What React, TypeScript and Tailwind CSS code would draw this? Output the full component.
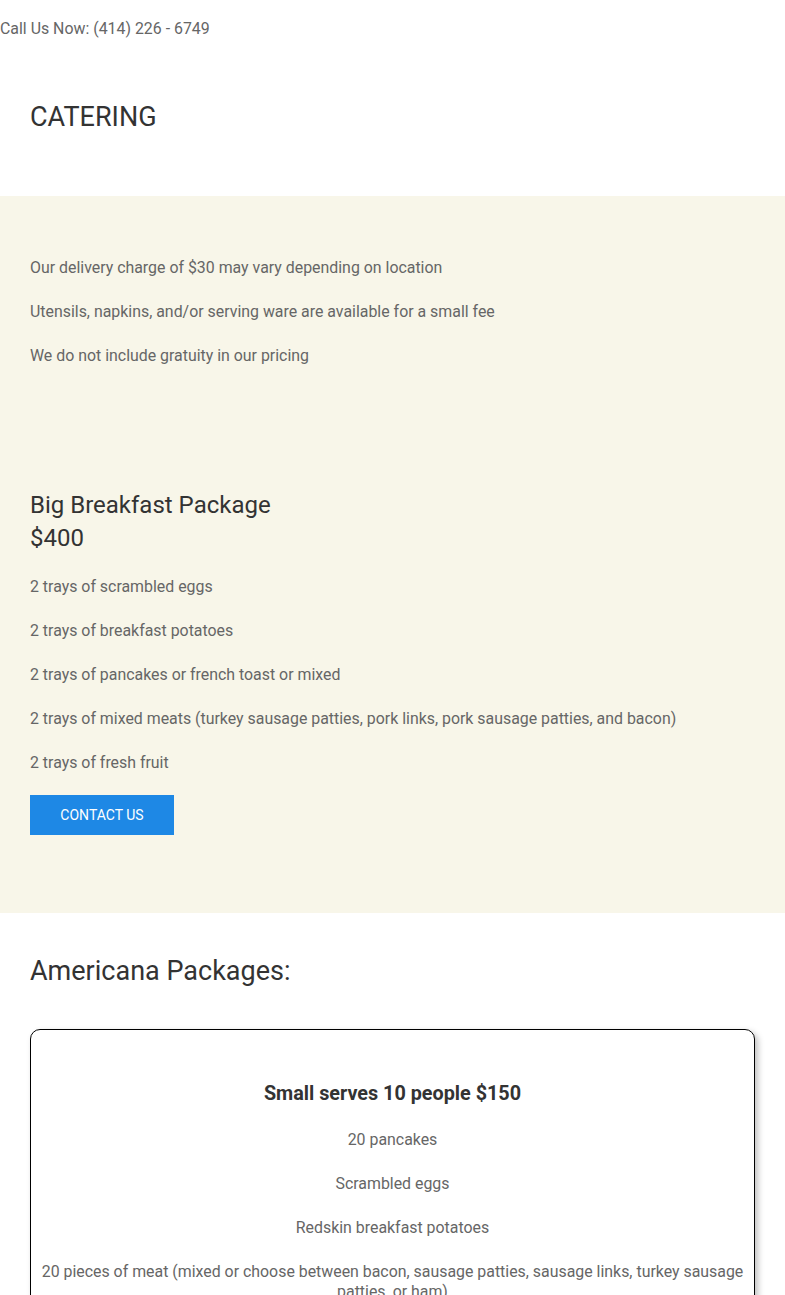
import React from "react";

const font = { fontFamily: "Roboto, 'Noto Sans', sans-serif" };

export default function App() {
  const infos = [
    "Our delivery charge of $30 may vary depending on location",
    "Utensils, napkins, and/or serving ware are available for a small fee",
    "We do not include gratuity in our pricing",
  ];
  const trays = [
    "2 trays of scrambled eggs",
    "2 trays of breakfast potatoes",
    "2 trays of pancakes or french toast or mixed",
    "2 trays of mixed meats (turkey sausage patties, pork links, pork sausage patties, and bacon)",
    "2 trays of fresh fruit",
  ];
  const small = [
    "20 pancakes",
    "Scrambled eggs",
    "Redskin breakfast potatoes",
    "20 pieces of meat (mixed or choose between bacon, sausage patties, sausage links, turkey sausage patties, or ham)",
  ];
  return (
    <div className="bg-white text-[15.9px] text-[#666] min-h-[1295px]" style={font}>
      <div className="pt-[17px] leading-[24px]">Call Us Now: (414) 226 - 6749</div>
      <div className="px-[30px] pt-[61px] pb-[64px]">
        <h1 className="text-[27px] leading-[30px] text-[#333]">CATERING</h1>
      </div>
      <div className="bg-[#f8f6e9] px-[30px] pt-[60px] pb-[78px]">
        <div className="flex flex-col gap-[20px]">
          {infos.map((t) => (
            <p key={t} className="leading-[24px]">{t}</p>
          ))}
        </div>
        <h2 className="mt-[121px] text-[24px] leading-[33px] text-[#333]">
          Big Breakfast Package
          <br />$400
        </h2>
        <div className="mt-[20px] flex flex-col gap-[20px]">
          {trays.map((t) => (
            <p key={t} className="leading-[24px]">{t}</p>
          ))}
        </div>
        <button className="mt-[20px] w-[144px] h-[40px] bg-[#1e88e5] text-white text-[14px] uppercase">
          Contact Us
        </button>
      </div>
      <div className="px-[30px] pt-[39px]">
        <h2 className="text-[27px] leading-[38px] text-[#333]">Americana Packages:</h2>
        <div className="mt-[39px] border border-black rounded-[10px] shadow-[3px_3px_6px_rgba(0,0,0,0.25)] px-[8px] pt-[50px] pb-[30px] text-center">
          <h3 className="text-[19.8px] leading-[28px] font-bold text-[#333]">Small serves 10 people $150</h3>
          <div className="mt-[22px] flex flex-col gap-[24px]">
            {small.map((t) => (
              <p key={t} className="leading-[20px]">{t}</p>
            ))}
          </div>
        </div>
      </div>
    </div>
  );
}
